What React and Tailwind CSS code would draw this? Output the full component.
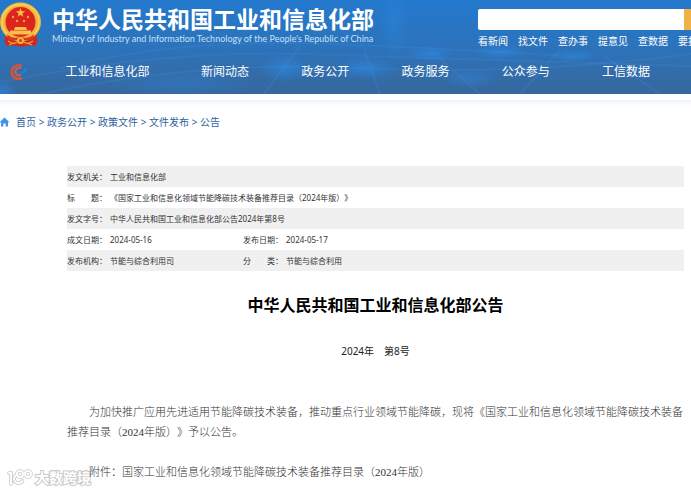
const navItems = ["新闻动态", "政务公开", "政务服务", "公众参与", "工信数据"];
const quickLinks = ["看新闻", "找文件", "查办事", "提意见", "查数据", "要投诉"];
const crumbs = ["首页", "政务公开", "政策文件", "文件发布", "公告"];

function Emblem() {
  return (
    <svg viewBox="0 0 42 46" className="h-[46px] w-[42px] shrink-0" role="img" aria-label="国徽">
      <path d="M6 30L4.500 40L7 44L14 43.500L21 45L28 43.500L35 44L37.500 40L36 30Z" fill="#cf2a1e" />
      <ellipse cx="20.500" cy="20" rx="20.500" ry="19.500" fill="#f1b63a" />
      <ellipse cx="20.500" cy="20" rx="18.500" ry="17.500" fill="none" stroke="#f8d05c" strokeWidth="1.500" />
      <circle cx="20.500" cy="20" r="15" fill="#de251d" />
      <path d="M20.500 6l1.100 3.300h3.500l-2.800 2.100 1 3.400-2.800-2-2.800 2 1-3.400-2.800-2.100h3.500z" fill="#f8c845" />
      <g fill="#f0a63a">
        <circle cx="13" cy="15" r="1.200" />
        <circle cx="28" cy="15" r="1.200" />
        <circle cx="17" cy="19" r="1.200" />
        <circle cx="24" cy="19" r="1.200" />
      </g>
      <path d="M15 25h11l1 3H14zM10 28.500h21v4H10z" fill="#f6c04a" />
      <path d="M7 32q6 5 10 3.500h7q4 1.500 10-3.500l-1 5q-6 2-9 1h-7q-3 1-9-1z" fill="#dc3521" />
      <circle cx="20.500" cy="38.500" r="3.500" fill="#f3b43a" />
      <circle cx="20.500" cy="38.500" r="1.500" fill="#dc3521" />
      <path d="M8 39q6 4 9 1M33 39q-6 4-9 1M9 43l5-2M32 43l-5-2" fill="none" stroke="#f0a234" strokeWidth="1.200" />
    </svg>
  );
}

function SiteMark() {
  return (
    <svg viewBox="0 0 20 18" className="h-[18px] w-5" aria-hidden="true">
      <path d="M13.500 3.500A6.500 6.500 0 1 0 14 14.500" fill="none" stroke="#dc5237" strokeWidth="3.200" strokeDasharray="2.600 .4" />
      <path d="M13 5.500c-3.500-1.500-6 1-5.500 4s3.500 3.500 5.500 2" fill="none" stroke="#e0603f" strokeWidth="1.600" />
      <path d="M10 9.500c3.500 1 6-1 6-4.500l3 .5c-.5 4.500-4.500 7-9 4z" fill="#1f80d8" />
    </svg>
  );
}

function HeaderTexture() {
  return (
    <svg viewBox="0 0 691 94" preserveAspectRatio="none" className="absolute inset-0 h-full w-full" aria-hidden="true">
      <defs>
        <radialGradient id="glow">
          <stop offset="0" stopColor="#2b8ae6" stopOpacity=".6" />
          <stop offset="1" stopColor="#2b8ae6" stopOpacity="0" />
        </radialGradient>
      </defs>
      <g fill="url(#glow)">
        <ellipse cx="394" cy="22" rx="14" ry="42" opacity=".6" />
        <ellipse cx="365" cy="68" rx="34" ry="12" />
        <ellipse cx="430" cy="54" rx="26" ry="8" />
        <ellipse cx="285" cy="68" rx="26" ry="14" />
        <ellipse cx="180" cy="84" rx="80" ry="14" opacity=".5" />
        <ellipse cx="500" cy="52" rx="28" ry="8" />
        <ellipse cx="574" cy="56" rx="26" ry="6" />
        <ellipse cx="470" cy="78" rx="30" ry="10" opacity=".7" />
        <ellipse cx="2" cy="92" rx="16" ry="12" />
      </g>
      <g fill="none" stroke="#3f93e4" strokeOpacity=".2" strokeWidth="2">
        <path d="M0 82Q160 50 300 54T691 66" />
        <path d="M40 94Q200 60 360 68T691 54" />
        <path d="M60 68Q180 38 330 44T560 56" />
        <path d="M300 46L264 94M362 44L380 94M430 50L480 94M560 50L520 94M604 56L660 94" />
      </g>
    </svg>
  );
}

function Header() {
  return (
    <header className="relative bg-linear-to-b from-[#2379cd] via-[#2c73bb] to-[#36679c] text-white">
      <HeaderTexture />
      <div className="relative flex h-[50px] items-start">
        <div className="flex min-w-0 flex-1 items-start pt-[2px]">
          <Emblem />
          <div className="ml-[10px] whitespace-nowrap pt-[3px]">
            <h1 className="text-[23px] leading-[28px] font-bold">中华人民共和国工业和信息化部</h1>
            <p className="font-[Lato,sans-serif] text-[9px] leading-[12px] text-[#c9e0f7]">
              Ministry of Industry and Information Technology of the People's Republic of China
            </p>
          </div>
        </div>
        <div className="w-[213px] shrink-0 overflow-hidden pt-[9px]">
          <form className="flex h-[21px]" onSubmit={(e) => e.preventDefault()}>
            <input aria-label="搜索" className="min-w-0 flex-1 rounded-l-xs bg-white px-2 text-[10px] text-gray-800 outline-none" />
            <button aria-label="提交搜索" className="w-[7px] bg-[#f0b146]" />
          </form>
          <nav aria-label="快捷入口" className="mt-1 flex gap-[10px] whitespace-nowrap text-[10px] leading-[14px]">
            {quickLinks.map((q) => (
              <a key={q} href="#" className="shrink-0">{q}</a>
            ))}
          </nav>
        </div>
      </div>
      <nav aria-label="主导航" className="relative flex h-11 items-center pr-[15px] text-[12px] leading-5 whitespace-nowrap">
        <a href="#" aria-label="首页" className="w-10 shrink-0 pl-2"><SiteMark /></a>
        <a href="#" className="w-[135px] shrink-0 text-center">工业和信息化部</a>
        {navItems.map((n) => (
          <a key={n} href="#" className="flex-1 text-center">{n}</a>
        ))}
      </nav>
    </header>
  );
}

function Breadcrumb() {
  return (
    <nav aria-label="当前位置" className="flex items-center text-[10px] leading-4 whitespace-nowrap text-[#2f5f9f]">
      <svg viewBox="0 0 10 10" className="mr-[6px] h-[10px] w-[10px]" aria-hidden="true">
        <path d="M4.500 0.500L9.500 5.200H8V9.500H5.700V6.500H3.300V9.500H1V5.200H0V4.700Z" fill="#4192ea" />
      </svg>
      {crumbs.map((c, i) => (
        <span key={c} className="flex">
          {i > 0 && <span className="w-[11px] text-center">&gt;</span>}
          <a href="#">{c}</a>
        </span>
      ))}
    </nav>
  );
}

function Split({ a, b }) {
  return (
    <span className="flex w-8 justify-between">
      <span>{a}</span>
      <span>{b}</span>
    </span>
  );
}

function Label({ children }) {
  return (
    <th scope="row" className="p-0 font-normal">
      <span className="flex">{children}：</span>
    </th>
  );
}

function MetaTable() {
  return (
    <table className="w-full table-fixed border-collapse text-left text-[8px] leading-[12px] text-[#333] [&_td]:p-0 [&_tr]:h-[21px] [&_tr:nth-child(odd)]:bg-[#f0f0f0]">
      <colgroup>
        <col className="w-[43px]" />
        <col className="w-[133px]" />
        <col className="w-[43px]" />
        <col />
      </colgroup>
      <tbody>
        <tr>
          <Label>发文机关</Label>
          <td colSpan={3}>工业和信息化部</td>
        </tr>
        <tr>
          <Label><Split a="标" b="题" /></Label>
          <td colSpan={3}>《国家工业和信息化领域节能降碳技术装备推荐目录（2024年版）》</td>
        </tr>
        <tr>
          <Label>发文字号</Label>
          <td colSpan={3}>中华人民共和国工业和信息化部公告2024年第8号</td>
        </tr>
        <tr>
          <Label>成文日期</Label>
          <td>2024-05-16</td>
          <Label>发布日期</Label>
          <td>2024-05-17</td>
        </tr>
        <tr>
          <Label>发布机构</Label>
          <td>节能与综合利用司</td>
          <Label><Split a="分" b="类" /></Label>
          <td>节能与综合利用</td>
        </tr>
      </tbody>
    </table>
  );
}

function Watermark() {
  return (
    <div className="absolute bottom-[3px] left-[7px] flex items-center gap-[2px]">
      <svg viewBox="0 0 26 18" className="h-[18px] w-[26px]" fill="none" strokeLinecap="round" aria-hidden="true">
        {[["#c8c8c8", 3.6], ["#ffffff", 2]].map(([color, width]) => (
          <g key={color} stroke={color} strokeWidth={width}>
            <path d="M2 4h2v11M8.500 6.500a4.500 4.500 0 1 0 7 5.500" />
            <circle cx="13" cy="5" r="3" />
            <circle cx="21" cy="5" r="3" />
          </g>
        ))}
      </svg>
      <span className="text-[14px] leading-5 font-bold text-white [-webkit-text-stroke:2px_#c8c8c8] [paint-order:stroke_fill]">
        大数跨境
      </span>
    </div>
  );
}

export default function App() {
  return (
    <div className="relative min-h-screen overflow-hidden bg-white font-['Noto_Sans','Noto_Sans_CJK_SC',sans-serif] [text-spacing-trim:space-all]">
      <Header />
      <div className="mt-[6px] h-[6px] bg-linear-to-b from-[#edf4fa] to-white" />
      <div className="pt-2">
        <Breadcrumb />
      </div>
      <Watermark />
      <main className="relative pt-[36px] pr-[7px] pl-[67px]">
        <MetaTable />
        <h2 className="mt-[22px] text-center text-[16px] leading-6 font-bold text-black">中华人民共和国工业和信息化部公告</h2>
        <p className="mt-[26px] text-center text-[10px] leading-4 text-[#222]">2024年　第8号</p>
        <article className="mt-[43px] font-['Liberation_Serif','Noto_Sans_CJK_SC',serif] text-[11px] leading-5 font-light text-[#333]">
          <p className="indent-[22px]">
            为加快推广应用先进适用节能降碳技术装备，推动重点行业领域节能降碳，现将《国家工业和信息化领域节能降碳技术装备推荐目录（2024年版）》予以公告。
          </p>
          <p className="mt-5 indent-[22px]">附件：国家工业和信息化领域节能降碳技术装备推荐目录（2024年版）</p>
        </article>
      </main>
    </div>
  );
}
